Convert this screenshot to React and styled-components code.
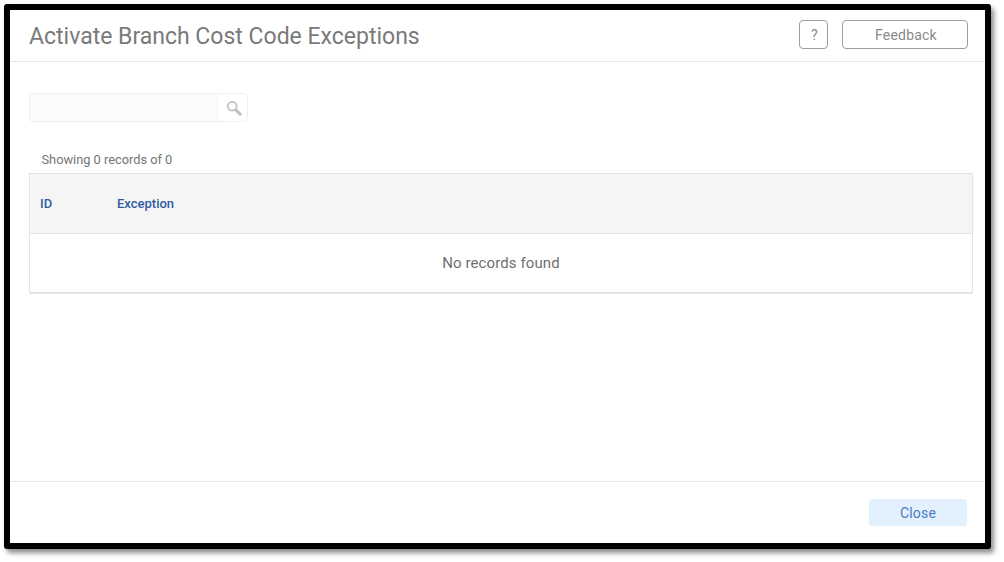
import React from "react";
import styled, { createGlobalStyle } from "styled-components";

const GlobalStyle = createGlobalStyle`
  html, body {
    margin: 0;
    padding: 0;
    background: #fff;
    font-family: Roboto, "Liberation Sans", sans-serif;
  }
`;

function SearchIcon() {
  return (
    <svg width="16" height="16" viewBox="0 0 16 16" fill="none">
      <circle cx="6.2" cy="6.2" r="4.4" stroke="#c6c6c6" strokeWidth="2" />
      <path d="M9.8 9.8L14.2 14.2" stroke="#c0c0c0" strokeWidth="3" strokeLinecap="round" />
    </svg>
  );
}

export default function App() {
  return (
    <>
      <GlobalStyle />
      <Page>
        <Dialog>
          <Header>
            <Title>Activate Branch Cost Code Exceptions</Title>
            <HeaderActions>
              <OutlineButton $width={29}>?</OutlineButton>
              <OutlineButton $width={126}>Feedback</OutlineButton>
            </HeaderActions>
          </Header>

          <Body>
            <SearchBox>
              <SearchInput placeholder="Search" />
              <SearchButton>
                <SearchIcon />
              </SearchButton>
            </SearchBox>

            <RecordCount>Showing 0 records of 0</RecordCount>

            <Table>
              <HeaderRow>
                <IdCell>ID</IdCell>
                <span>Exception</span>
              </HeaderRow>
              <EmptyRow>No records found</EmptyRow>
            </Table>
          </Body>

          <Footer>
            <CloseButton>Close</CloseButton>
          </Footer>
        </Dialog>
      </Page>
    </>
  );
}

const Page = styled.div`
  width: 1004px;
  height: 562px;
  padding: 4px 0 0 4px;
  box-sizing: border-box;
  overflow: hidden;
`;

const Dialog = styled.div`
  width: 987px;
  height: 545px;
  box-sizing: border-box;
  border: 6px solid #000;
  border-radius: 3px;
  background: #fff;
  box-shadow: 3px 4px 5px rgba(0, 0, 0, 0.45);
  display: flex;
  flex-direction: column;
`;

const Header = styled.div`
  height: 52px;
  flex: none;
  box-sizing: border-box;
  border-bottom: 1px solid #e6e6e6;
  padding: 0 17px 0 19px;
  display: flex;
  align-items: center;
  justify-content: space-between;
`;

const Title = styled.div`
  font-size: 23px;
  color: #7a7a7a;
  padding-top: 1px;
`;

const HeaderActions = styled.div`
  display: flex;
  align-items: center;
  gap: 14px;
  margin-top: -2px;
`;

const OutlineButton = styled.button`
  width: ${(p) => p.$width}px;
  height: 29px;
  box-sizing: border-box;
  padding: 1px 0 0 2px;
  border: 1px solid #9e9e9e;
  border-radius: 4px;
  background: #fff;
  color: #8a8a8a;
  font-family: inherit;
  font-size: 14px;
  letter-spacing: 0.2px;
`;

const Body = styled.div`
  flex: 1;
  padding: 31px 12px 0 19px;
`;

const SearchBox = styled.div`
  width: 219px;
  height: 29px;
  box-sizing: border-box;
  border: 1px solid #f0f0f0;
  border-radius: 4px;
  display: flex;
`;

const SearchInput = styled.input`
  width: 188px;
  box-sizing: border-box;
  border: none;
  border-right: 1px solid #f4f4f4;
  border-radius: 4px 0 0 4px;
  background: #fbfbfb;
  padding: 0 8px;
  font-family: inherit;
  font-size: 14px;
  outline: none;

  &::placeholder {
    color: #fff;
    opacity: 1;
  }
`;

const SearchButton = styled.div`
  flex: 1;
  display: flex;
  align-items: center;
  justify-content: center;
  padding-left: 2px;
`;

const RecordCount = styled.div`
  margin: 30px 0 0 12.5px;
  height: 21px;
  line-height: 16px;
  font-size: 12.8px;
  color: #757575;
`;

const Table = styled.div`
  width: 944px;
  box-sizing: border-box;
  border: 1px solid #e4e4e4;
  border-bottom-width: 2px;
`;

const HeaderRow = styled.div`
  height: 60px;
  box-sizing: border-box;
  border-bottom: 1px solid #e4e4e4;
  background: #f5f5f5;
  padding-left: 10px;
  display: flex;
  align-items: center;
  font-size: 13px;
  font-weight: 500;
  color: #2f5d9f;
`;

const IdCell = styled.span`
  width: 77px;
`;

const EmptyRow = styled.div`
  height: 58px;
  display: flex;
  align-items: center;
  justify-content: center;
  font-size: 15px;
  letter-spacing: 0.1px;
  color: #6f6f6f;
`;

const Footer = styled.div`
  height: 62px;
  flex: none;
  box-sizing: border-box;
  border-top: 1px solid #e6e6e6;
  padding: 17px 18px 0 0;
  display: flex;
  justify-content: flex-end;
  align-items: flex-start;
`;

const CloseButton = styled.button`
  width: 98px;
  height: 27px;
  padding: 0;
  border: none;
  border-radius: 3px;
  background: #e3f0fd;
  color: #4a7cc4;
  font-family: inherit;
  font-size: 14px;
  letter-spacing: 0.2px;
`;
